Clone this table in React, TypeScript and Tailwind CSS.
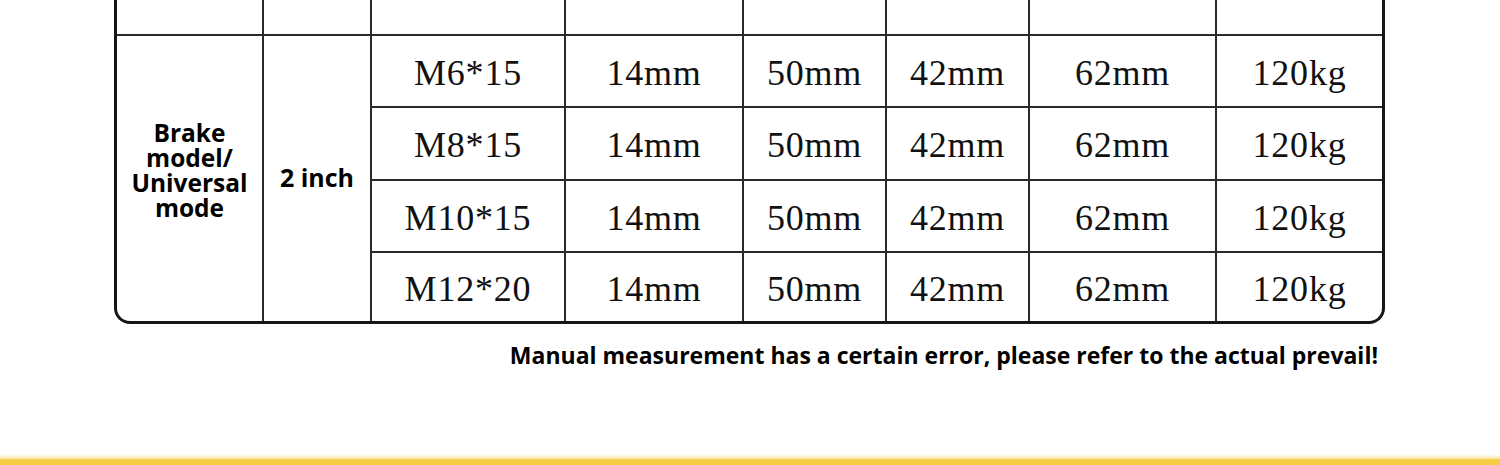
import React from "react";

const rows = [
  ["M6*15", "14mm", "50mm", "42mm", "62mm", "120kg"],
  ["M8*15", "14mm", "50mm", "42mm", "62mm", "120kg"],
  ["M10*15", "14mm", "50mm", "42mm", "62mm", "120kg"],
  ["M12*20", "14mm", "50mm", "42mm", "62mm", "120kg"],
];
const rowH = ["h-[72px]", "h-[73px]", "h-[72px]", "h-[70px]"];

const serif = "font-['Liberation_Serif','Times_New_Roman',serif] text-[36px] tracking-[0.8px] text-[#111111]";
const sans = "font-['Open_Sans','Noto_Sans',sans-serif] font-bold text-black";

export default function App() {
  return (
    <div className="w-[1500px] h-[465px] bg-white flex flex-col overflow-hidden">
      <div className="ml-[114px] w-[1271px] border-x-[3px] border-b-[3px] border-[#161616] rounded-b-[16px] overflow-hidden">
        <div className="grid grid-cols-[147px_108px_194px_178px_143px_143px_187px_165px]">
          {Array.from({ length: 8 }).map((_, i) => (
            <div
              key={"top" + i}
              className={
                "h-[34px] " + (i < 7 ? "border-r-2 border-[#2a2a2a]" : "")
              }
            />
          ))}
          <div
            className={
              "row-span-4 border-t-2 border-r-2 border-[#2a2a2a] flex items-center justify-center text-center text-[24.5px] leading-[25px] " +
              sans
            }
          >
            <span className="pb-[18px]">
              Brake
              <br />
              model/
              <br />
              Universal
              <br />
              mode
            </span>
          </div>
          <div
            className={
              "row-span-4 border-t-2 border-r-2 border-[#2a2a2a] flex items-center justify-center text-[25px] " +
              sans
            }
          >
            <span className="pb-[2px]">2 inch</span>
          </div>
          {rows.map((r, ri) =>
            r.map((c, ci) => (
              <div
                key={ri + "-" + ci}
                className={
                  rowH[ri] +
                  " border-t-2 border-[#2a2a2a] flex items-center justify-center pt-[3px] " +
                  (ci < 5 ? "border-r-2 " : "") +
                  serif
                }
              >
                {c}
              </div>
            ))
          )}
        </div>
      </div>
      <div className="w-[1500px] flex justify-end pr-[122px] mt-[16px]">
        <p className={"text-[23px] leading-[30px] " + sans}>
          Manual measurement has a certain error, please refer to the actual prevail!
        </p>
      </div>
      <div className="flex-1" />
      <div className="h-[4px] bg-gradient-to-b from-[#fffdf3] to-[#fbe29a]" />
      <div className="h-[6px] bg-[#f8cd46]" />
    </div>
  );
}
